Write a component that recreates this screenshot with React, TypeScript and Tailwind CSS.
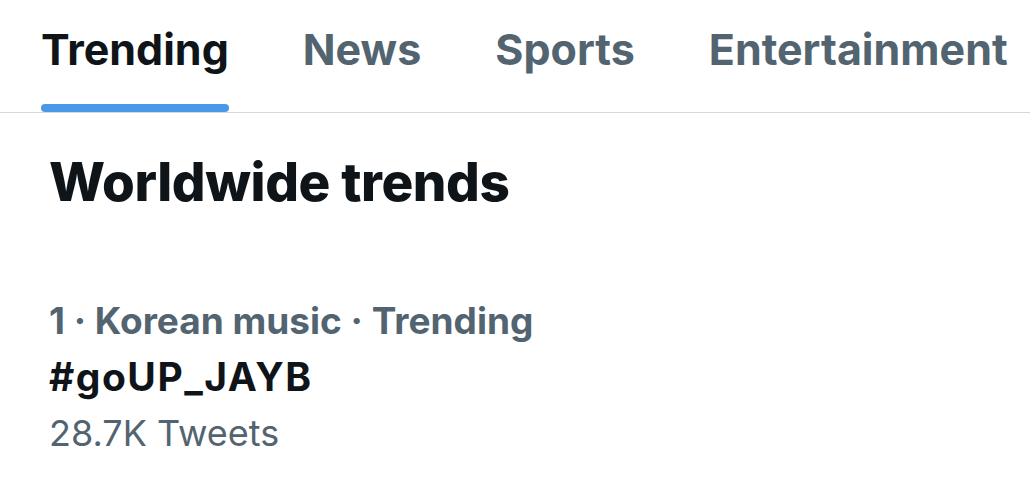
import React, { useState } from 'react';

const tabs = ['Trending', 'News', 'Sports', 'Entertainment'];

export default function App() {
  const [active, setActive] = useState(0);

  return (
    <div className="w-[1030px] h-[492px] bg-white overflow-hidden" style={{ fontFamily: 'Inter, "Open Sans", sans-serif' }}>
      <div className="border-b border-[#cfd9de]">
        <div className="flex gap-[74px] pl-[41px] pt-[23px]">
          {tabs.map((tab, i) => (
            <button
              key={tab}
              onClick={() => setActive(i)}
              className="flex flex-col items-stretch"
            >
              <span
                className={`text-[43px] leading-[52px] font-bold whitespace-nowrap ${
                  active === i ? 'text-[#0f1419]' : 'text-[#536471]'
                }`}
              >
                {tab}
              </span>
              <span
                className={`mt-[29px] h-[8px] rounded-full ${active === i ? 'bg-[#4a99e9]' : 'bg-transparent'}`}
              />
            </button>
          ))}
        </div>
      </div>

      <div className="pl-[49px]">
        <h1 className="mt-[37px] text-[53px] leading-[64px] font-extrabold text-[#0f1419] tracking-[-0.4px]">
          Worldwide trends
        </h1>

        <div className="mt-[79px]">
          <div className="text-[37px] leading-[55px] font-bold text-[#536471]">
            1 · Korean music · Trending
          </div>
          <div className="text-[39px] leading-[58px] font-bold tracking-[1.5px] text-[#0f1419]">#goUP_JAYB</div>
          <div className="text-[36px] leading-[54px] text-[#536471]">28.7K Tweets</div>
        </div>
      </div>
    </div>
  );
}
